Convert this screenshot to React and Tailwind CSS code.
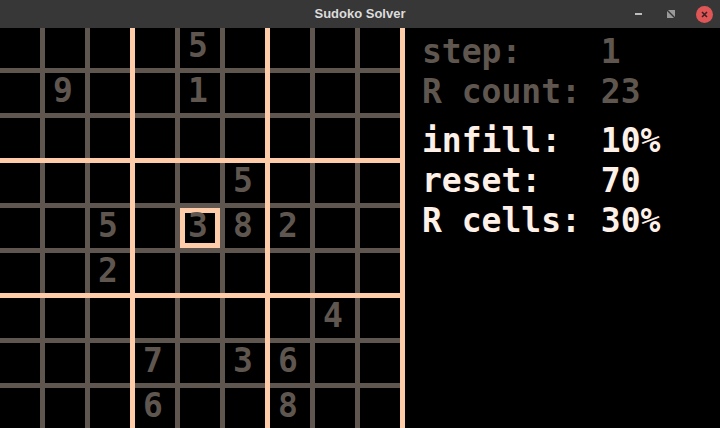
import React from "react";

const GIVEN = {
  "0-4": 5,
  "1-1": 9,
  "1-4": 1,
  "3-5": 5,
  "4-2": 5,
  "4-4": 3,
  "4-5": 8,
  "4-6": 2,
  "5-2": 2,
  "6-7": 4,
  "7-3": 7,
  "7-5": 3,
  "7-6": 6,
  "8-3": 6,
  "8-6": 8,
};

const SELECTED = "4-4";

const STATS = [
  { text: "step:    1", dim: true },
  { text: "R count: 23", dim: true },
  { text: "infill:  10%", dim: false },
  { text: "reset:   70", dim: false },
  { text: "R cells: 30%", dim: false },
];

function Cell({ r, c }) {
  const key = `${r}-${c}`;
  const value = GIVEN[key];
  const selected = key === SELECTED;
  return (
    <div className="relative w-[40px] h-[40px] bg-black">
      {selected && (
        <div className="absolute inset-0 border-[5px] border-[#ffccaa]" />
      )}
      {value && (
        <span className="absolute left-[8px] top-0 leading-[36px] text-[33px] font-bold text-[#5f574f]">
          {value}
        </span>
      )}
    </div>
  );
}

function Block({ br, bc }) {
  const cells = [];
  for (let i = 0; i < 3; i++) {
    for (let j = 0; j < 3; j++) {
      cells.push(<Cell key={`${i}-${j}`} r={br * 3 + i} c={bc * 3 + j} />);
    }
  }
  return (
    <div className="grid grid-cols-[repeat(3,40px)] gap-[5px] bg-[#5f574f]">
      {cells}
    </div>
  );
}

function TitleBar() {
  return (
    <div className="relative h-[28px] bg-[#373737] flex items-center justify-center shrink-0">
      <span className="font-['Liberation_Sans',sans-serif] font-bold text-[13px] text-[#dcdcdc]">
        Sudoko Solver
      </span>
      <div className="absolute right-0 top-0 h-[28px] flex items-center">
        <div className="w-[7px] h-[2px] bg-[#bdbdbd] mr-[25px]" />
        <svg width="8" height="8" viewBox="0 0 8 8" className="mr-[21px]">
          <path d="M1 0 H8 V7 Z" fill="#9a9a9a" />
          <path d="M0 1 V8 H7 Z" fill="#9a9a9a" />
        </svg>
        <div className="w-[17px] h-[17px] rounded-full bg-[#e05656] flex items-center justify-center mr-[7px]">
          <svg width="7" height="7" viewBox="0 0 7 7">
            <path d="M1 1 L6 6 M6 1 L1 6" stroke="#3a2222" strokeWidth="1.6" />
          </svg>
        </div>
      </div>
    </div>
  );
}

export default function App() {
  const blocks = [];
  for (let br = 0; br < 3; br++) {
    for (let bc = 0; bc < 3; bc++) {
      blocks.push(<Block key={`${br}-${bc}`} br={br} bc={bc} />);
    }
  }

  return (
    <div className="w-[720px] h-[428px] overflow-hidden bg-black flex flex-col font-['DejaVu_Sans_Mono',monospace]">
      <TitleBar />
      <div className="flex">
        {/* board */}
        <div className="grid grid-cols-[repeat(3,130px)] gap-[5px] bg-[#ffccaa] pr-[5px] pb-[5px] w-[405px] shrink-0 self-start">
          {blocks}
        </div>

        {/* stats */}
        <div className="pl-[17px] pt-[4px] flex flex-col">
          {STATS.map((s, i) => (
            <div
              key={s.text}
              className={`whitespace-pre text-[33px] leading-[40px] font-bold ${
                s.dim ? "text-[#5f574f]" : "text-[#fff1e8]"
              } ${i === 2 ? "mt-[9px]" : ""}`}
            >
              {s.text}
            </div>
          ))}
        </div>
      </div>
    </div>
  );
}
